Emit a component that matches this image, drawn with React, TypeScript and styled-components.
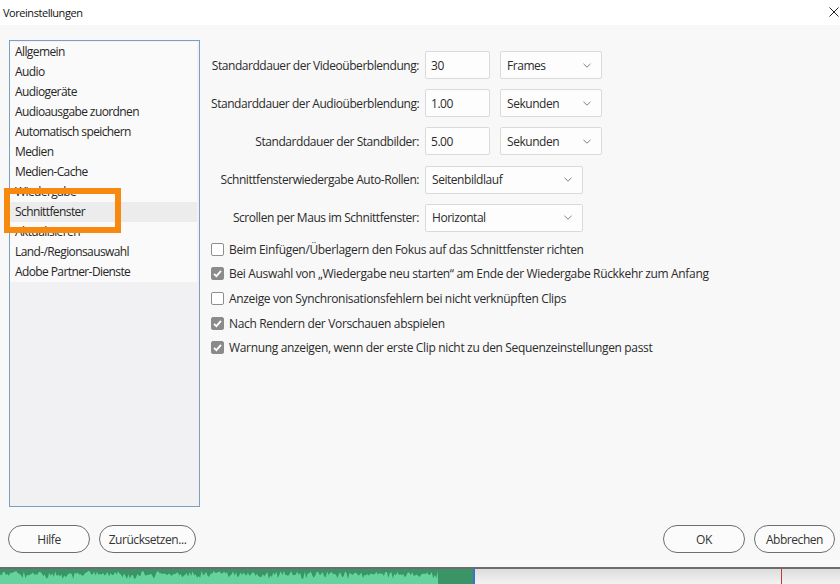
import React from 'react';
import styled, { createGlobalStyle } from 'styled-components';

const Global = createGlobalStyle`
  html, body { margin: 0; padding: 0; }
  body {
    width: 840px;
    height: 584px;
    overflow: hidden;
    background: #f8f8f8;
    font-family: "Open Sans", "Noto Sans", sans-serif;
    letter-spacing: -0.45px;
    color: #2b2b2b;
  }
  * { box-sizing: border-box; }
`;

const Page = styled.div`
  position: relative;
  width: 840px;
  height: 584px;
  display: flex;
  flex-direction: column;
`;

const Dialog = styled.div`
  height: 567px;
  display: flex;
  flex-direction: column;
  background: #f8f8f8;
`;

const TitleBar = styled.div`
  height: 25px;
  background: #ffffff;
  display: flex;
  align-items: center;
  justify-content: space-between;
  padding: 0 1px 0 3px;
  font-size: 11px;
  letter-spacing: -0.45px;
  color: #111;
`;

const CloseButton = styled.div`
  width: 10px;
  height: 10px;
  display: flex;
  margin-top: -1px;
`;

const Body = styled.div`
  display: flex;
  padding: 15px 0 0 9px;
  gap: 11px;
`;

const Sidebar = styled.div`
  width: 191px;
  height: 467px;
  border: 1px solid #7b9fc0;
  background: #f1f1f3;
  padding-top: 1px;
  display: flex;
  flex-direction: column;
`;

const ListItem = styled.div<{ $selected?: boolean }>`
  height: 20px;
  line-height: 20px;
  padding: 0 0 0 5px;
  margin-right: 2px;
  font-size: 12px;
  letter-spacing: -0.6px;
  color: #262626;
  background: ${(p) => (p.$selected ? '#ececed' : '#fafafa')};
  white-space: nowrap;
`;

const Content = styled.div`
  display: flex;
  flex-direction: column;
  padding-top: 11px;
`;

const Form = styled.div`
  display: flex;
  flex-direction: column;
  gap: 10.2px;
`;

const FormRow = styled.div`
  display: flex;
  align-items: center;
  height: 28px;
`;

const Label = styled.div`
  width: 208px;
  text-align: right;
  font-size: 12px;
  color: #2b2b2b;
  white-space: nowrap;
  margin-right: 6px;
`;

const NumberField = styled.div`
  width: 65px;
  height: 28px;
  border: 1px solid #dadada;
  border-radius: 2px;
  background: #fdfdfd;
  padding-left: 5px;
  display: flex;
  align-items: center;
  font-size: 12px;
  color: #2b2b2b;
  margin-right: 10px;
`;

const SelectBox = styled.div<{ $width: number }>`
  width: ${(p) => p.$width}px;
  height: 28px;
  border: 1px solid #dadada;
  border-radius: 2px;
  background: #fdfdfd;
  padding: 0 10px 0 6px;
  display: flex;
  align-items: center;
  justify-content: space-between;
  font-size: 12px;
  color: #2b2b2b;
`;

const Checks = styled.div`
  display: flex;
  flex-direction: column;
  margin-top: 5px;
`;

const CheckRow = styled.div`
  height: 24.7px;
  display: flex;
  align-items: center;
  gap: 5px;
  font-size: 12px;
  letter-spacing: -0.34px;
  color: #2b2b2b;
  white-space: nowrap;
`;

const Box = styled.span<{ $checked?: boolean }>`
  width: 13px;
  height: 13px;
  border-radius: 2px;
  border: 1px solid ${(p) => (p.$checked ? '#8b8b8b' : '#8e8e8e')};
  background: ${(p) => (p.$checked ? '#8b8b8b' : '#ffffff')};
  display: flex;
  align-items: center;
  justify-content: center;
  flex: none;
`;

const Footer = styled.div`
  display: flex;
  justify-content: space-between;
  padding: 18px 5px 14px 8px;
`;

const ButtonGroup = styled.div`
  display: flex;
  gap: 9px;
`;

const PillButton = styled.div<{ $width: number }>`
  width: ${(p) => p.$width}px;
  height: 28px;
  border: 1px solid #6e6e6e;
  border-radius: 14px;
  display: flex;
  align-items: center;
  justify-content: center;
  font-size: 12px;
  color: #333;
  background: #fbfbfb;
`;

const Backdrop = styled.div`
  flex: 1;
  display: flex;
  border-top: 2px solid #6d6d6d;
`;

const WaveTrack = styled.div`
  width: 475px;
  background: #3a9466;
  border-right: 2px solid #3d6fcf;
  display: flex;
`;

const TimelineRest = styled.div`
  flex: 1;
  display: flex;
  background: linear-gradient(#dcdcdc, #f3f3f3);
`;

const Playhead = styled.div`
  margin-left: 306px;
  width: 1px;
  background: #c0392b;
`;

const Highlight = styled.div`
  position: absolute;
  left: 4px;
  top: 188px;
  width: 117px;
  height: 45px;
  border: 6px solid #f7890f;
`;

function wavePath(w: number, h: number) {
  let seed = 11;
  const rnd = () => {
    seed = (seed * 9301 + 49297) % 233280;
    return seed / 233280;
  };
  let d = `M0 ${h}`;
  for (let x = 0; x <= w; x += 1.5) {
    const y = 2 + rnd() * 5 + (rnd() < 0.25 ? 3 : 0);
    d += ` L${x.toFixed(1)} ${y.toFixed(1)}`;
  }
  d += ` L${w} ${h} Z`;
  return d;
}

const Chevron = () => (
  <svg width="8" height="5" viewBox="0 0 8 5">
    <polyline points="0.5,0.8 4,4.2 7.5,0.8" fill="none" stroke="#808080" strokeWidth="1" />
  </svg>
);

const Check = () => (
  <svg width="11" height="11" viewBox="0 0 11 11">
    <polyline points="2,5.8 4.4,8.2 9,2.8" fill="none" stroke="#ffffff" strokeWidth="1.8" />
  </svg>
);

const items = [
  'Allgemein',
  'Audio',
  'Audiogeräte',
  'Audioausgabe zuordnen',
  'Automatisch speichern',
  'Medien',
  'Medien-Cache',
  'Wiedergabe',
  'Schnittfenster',
  'Aktualisieren',
  'Land-/Regionsauswahl',
  'Adobe Partner-Dienste',
];

const checks = [
  { text: 'Beim Einfügen/Überlagern den Fokus auf das Schnittfenster richten', checked: false },
  { text: 'Bei Auswahl von „Wiedergabe neu starten“ am Ende der Wiedergabe Rückkehr zum Anfang', checked: true },
  { text: 'Anzeige von Synchronisationsfehlern bei nicht verknüpften Clips', checked: false },
  { text: 'Nach Rendern der Vorschauen abspielen', checked: true },
  { text: 'Warnung anzeigen, wenn der erste Clip nicht zu den Sequenzeinstellungen passt', checked: true },
];

export default function App() {
  return (
    <Page>
      <Global />
      <Dialog>
        <TitleBar>
          <span>Voreinstellungen</span>
          <CloseButton>
            <svg width="10" height="10" viewBox="0 0 10 10">
              <path d="M0.5 0.5 L9.5 9.5 M9.5 0.5 L0.5 9.5" stroke="#222" strokeWidth="1" />
            </svg>
          </CloseButton>
        </TitleBar>
        <Body>
          <Sidebar>
            {items.map((it) => (
              <ListItem key={it} $selected={it === 'Schnittfenster'}>
                {it}
              </ListItem>
            ))}
          </Sidebar>
          <Content>
            <Form>
              <FormRow>
                <Label>Standarddauer der Videoüberblendung:</Label>
                <NumberField>30</NumberField>
                <SelectBox $width={102}>
                  Frames
                  <Chevron />
                </SelectBox>
              </FormRow>
              <FormRow>
                <Label>Standarddauer der Audioüberblendung:</Label>
                <NumberField>1.00</NumberField>
                <SelectBox $width={102}>
                  Sekunden
                  <Chevron />
                </SelectBox>
              </FormRow>
              <FormRow>
                <Label>Standarddauer der Standbilder:</Label>
                <NumberField>5.00</NumberField>
                <SelectBox $width={102}>
                  Sekunden
                  <Chevron />
                </SelectBox>
              </FormRow>
              <FormRow>
                <Label>Schnittfensterwiedergabe Auto-Rollen:</Label>
                <SelectBox $width={158}>
                  Seitenbildlauf
                  <Chevron />
                </SelectBox>
              </FormRow>
              <FormRow>
                <Label>Scrollen per Maus im Schnittfenster:</Label>
                <SelectBox $width={158}>
                  Horizontal
                  <Chevron />
                </SelectBox>
              </FormRow>
            </Form>
            <Checks>
              {checks.map((c) => (
                <CheckRow key={c.text}>
                  <Box $checked={c.checked}>{c.checked && <Check />}</Box>
                  {c.text}
                </CheckRow>
              ))}
            </Checks>
          </Content>
        </Body>
        <Footer>
          <ButtonGroup>
            <PillButton $width={82}>Hilfe</PillButton>
            <PillButton $width={97}>Zurücksetzen...</PillButton>
          </ButtonGroup>
          <ButtonGroup>
            <PillButton $width={82}>OK</PillButton>
            <PillButton $width={81}>Abbrechen</PillButton>
          </ButtonGroup>
        </Footer>
      </Dialog>
      <Backdrop>
        <WaveTrack>
          <svg width="475" height="15" viewBox="0 0 475 15" preserveAspectRatio="none">
            <path d={wavePath(440, 15)} fill="#66d39f" />
          </svg>
        </WaveTrack>
        <TimelineRest>
          <Playhead />
        </TimelineRest>
      </Backdrop>
      <Highlight />
    </Page>
  );
}
